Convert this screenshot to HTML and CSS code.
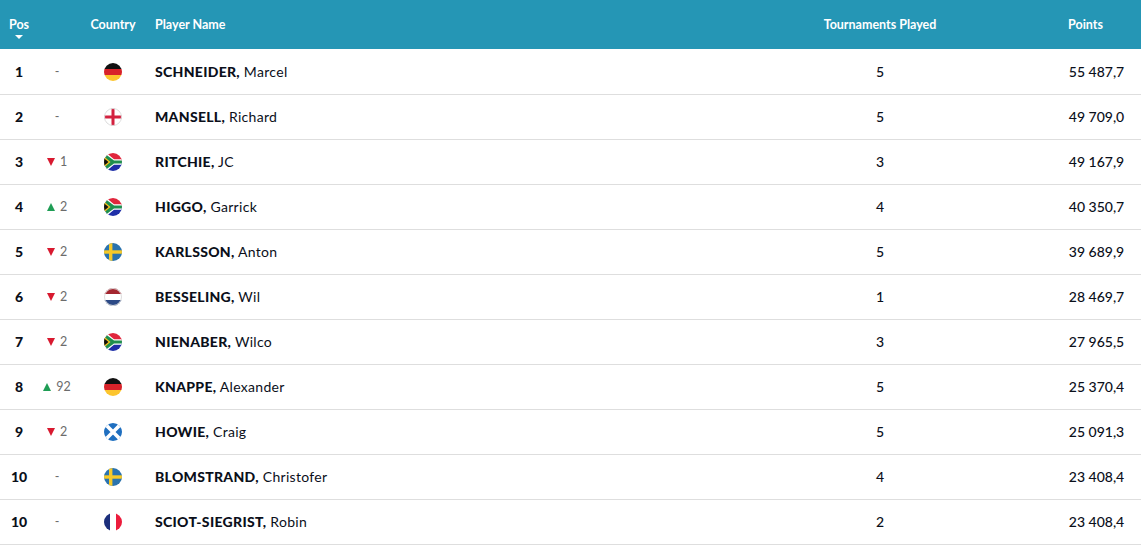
FILE: index.html
```html
<!DOCTYPE html>
<html lang="en">
<head>
<meta charset="utf-8">
<title>Rankings</title>
<link rel="stylesheet" href="styles.css">
</head>
<body>
<svg class="defs" width="0" height="0" aria-hidden="true">
  <defs>
    <clipPath id="c"><circle cx="9" cy="9" r="9"/></clipPath>
    <symbol id="de" viewBox="0 0 18 18"><g clip-path="url(#c)"><rect width="18" height="6" fill="#111"/><rect y="6" width="18" height="6" fill="#d8232a"/><rect y="12" width="18" height="6" fill="#fcc52e"/></g></symbol>
    <symbol id="en" viewBox="0 0 18 18"><g clip-path="url(#c)"><rect width="18" height="18" fill="#fff"/><rect x="7.5" width="3" height="18" fill="#d3213f"/><rect y="7.5" width="18" height="3" fill="#d3213f"/></g><circle cx="9" cy="9" r="8.5" fill="none" stroke="#ddd"/></symbol>
    <symbol id="za" viewBox="0 0 18 18"><g clip-path="url(#c)"><rect width="18" height="9" fill="#e0263c"/><rect y="9" width="18" height="9" fill="#1f2fa8"/><path d="M0 0 L9 9 L0 18 Z" fill="#111"/><path d="M0-2 L10 6.2 H18 V11.8 H10 L0 20 Z" fill="#fff"/><path d="M0 0 L10 7.4 H18 V10.6 H10 L0 18 Z" fill="#1f8f4e"/><path d="M0 3.5 L6.5 9 L0 14.5 Z" fill="#f8c31f"/><path d="M0 5.2 L4.5 9 L0 12.8 Z" fill="#111"/></g></symbol>
    <symbol id="se" viewBox="0 0 18 18"><g clip-path="url(#c)"><rect width="18" height="18" fill="#2a73ae"/><rect x="5" width="3.4" height="18" fill="#f6c928"/><rect y="7.3" width="18" height="3.4" fill="#f6c928"/></g></symbol>
    <symbol id="nl" viewBox="0 0 18 18"><g clip-path="url(#c)"><rect width="18" height="6" fill="#a4262f"/><rect y="6" width="18" height="6" fill="#fff"/><rect y="12" width="18" height="6" fill="#2c4a86"/></g><circle cx="9" cy="9" r="8.5" fill="none" stroke="#ddd"/></symbol>
    <symbol id="sc" viewBox="0 0 18 18"><g clip-path="url(#c)"><rect width="18" height="18" fill="#1f6fc0"/><path d="M0 0 L18 18 M18 0 L0 18" stroke="#fff" stroke-width="3.6"/></g></symbol>
    <symbol id="fr" viewBox="0 0 18 18"><g clip-path="url(#c)"><rect width="6" height="18" fill="#1c2f7c"/><rect x="6" width="6" height="18" fill="#fff"/><rect x="12" width="6" height="18" fill="#ec1c3c"/></g></symbol>
  </defs>
</svg>
<table class="rank">
  <colgroup>
    <col class="c-pos"><col class="c-move"><col class="c-country"><col class="c-name"><col class="c-played"><col class="c-points">
  </colgroup>
  <thead>
    <tr>
      <th class="center"><span class="sort">Pos</span></th>
      <th></th>
      <th class="center">Country</th>
      <th class="left">Player Name</th>
      <th class="center">Tournaments Played</th>
      <th class="center">Points</th>
    </tr>
  </thead>
  <tbody>
    <tr><td class="pos">1</td><td class="move none">-</td><td class="flag"><svg><use href="#de"/></svg></td><td class="name"><b>SCHNEIDER,</b> Marcel</td><td class="num">5</td><td class="pts">55 487,7</td></tr>
    <tr><td class="pos">2</td><td class="move none">-</td><td class="flag"><svg><use href="#en"/></svg></td><td class="name"><b>MANSELL,</b> Richard</td><td class="num">5</td><td class="pts">49 709,0</td></tr>
    <tr><td class="pos">3</td><td class="move"><i class="down"></i>1</td><td class="flag"><svg><use href="#za"/></svg></td><td class="name"><b>RITCHIE,</b> JC</td><td class="num">3</td><td class="pts">49 167,9</td></tr>
    <tr><td class="pos">4</td><td class="move"><i class="up"></i>2</td><td class="flag"><svg><use href="#za"/></svg></td><td class="name"><b>HIGGO,</b> Garrick</td><td class="num">4</td><td class="pts">40 350,7</td></tr>
    <tr><td class="pos">5</td><td class="move"><i class="down"></i>2</td><td class="flag"><svg><use href="#se"/></svg></td><td class="name"><b>KARLSSON,</b> Anton</td><td class="num">5</td><td class="pts">39 689,9</td></tr>
    <tr><td class="pos">6</td><td class="move"><i class="down"></i>2</td><td class="flag"><svg><use href="#nl"/></svg></td><td class="name"><b>BESSELING,</b> Wil</td><td class="num">1</td><td class="pts">28 469,7</td></tr>
    <tr><td class="pos">7</td><td class="move"><i class="down"></i>2</td><td class="flag"><svg><use href="#za"/></svg></td><td class="name"><b>NIENABER,</b> Wilco</td><td class="num">3</td><td class="pts">27 965,5</td></tr>
    <tr><td class="pos">8</td><td class="move"><i class="up"></i>92</td><td class="flag"><svg><use href="#de"/></svg></td><td class="name"><b>KNAPPE,</b> Alexander</td><td class="num">5</td><td class="pts">25 370,4</td></tr>
    <tr><td class="pos">9</td><td class="move"><i class="down"></i>2</td><td class="flag"><svg><use href="#sc"/></svg></td><td class="name"><b>HOWIE,</b> Craig</td><td class="num">5</td><td class="pts">25 091,3</td></tr>
    <tr><td class="pos">10</td><td class="move none">-</td><td class="flag"><svg><use href="#se"/></svg></td><td class="name"><b>BLOMSTRAND,</b> Christofer</td><td class="num">4</td><td class="pts">23 408,4</td></tr>
    <tr><td class="pos">10</td><td class="move none">-</td><td class="flag"><svg><use href="#fr"/></svg></td><td class="name"><b>SCIOT-SIEGRIST,</b> Robin</td><td class="num">2</td><td class="pts">23 408,4</td></tr>
  </tbody>
</table>
</body>
</html>
```

FILE: styles.css
```css
html, body { margin: 0; padding: 0; background: #fff; overflow: hidden; }
body { font-family: "Lato", "Open Sans", sans-serif; color: #0b0f1a; }
.defs { position: absolute; }
.rank { width: 1141px; table-layout: fixed; border-collapse: collapse; font-size: 14px; }
.c-pos { width: 38px; }
.c-move { width: 38px; }
.c-country { width: 74px; }
.c-name { width: 580px; }
.c-played { width: 300px; }
.c-points { width: 111px; }
thead tr { height: 49px; background: #2596b5; color: #fff; }
th { font-size: 12.5px; font-weight: 700; padding: 0 0 0 0; vertical-align: middle; }
.center { text-align: center; }
.left { text-align: left; padding-left: 5px; }
.sort { display: inline-block; position: relative; }
.sort::after { content: ""; position: absolute; left: 50%; margin-left: -4px; top: 18px; border: 4px solid transparent; border-top: 4px solid #fff; border-bottom: 0; }
tbody tr { height: 45px; border-bottom: 1px solid #dedede; }
td { padding: 0; text-align: center; vertical-align: middle; }
.pos { font-weight: 900; }
.move { font-size: 12.5px; color: #6c6c6c; white-space: nowrap; }
.move.none { padding-left: 0; }
.move i { display: inline-block; width: 0; height: 0; margin-right: 5px; border-left: 4.5px solid transparent; border-right: 4.5px solid transparent; }
.move .down { border-top: 8px solid #d8192f; }
.move .up { border-bottom: 8px solid #1f9d55; }
.flag svg { display: block; width: 18px; height: 18px; margin: 1px auto 0; }
.name { text-align: left; padding-left: 5px; letter-spacing: 0.3px; }
.name b { font-weight: 900; }
.num { font-size: 14px; font-weight: 500; }
.pts { font-weight: 500; padding-left: 22px; }
```
